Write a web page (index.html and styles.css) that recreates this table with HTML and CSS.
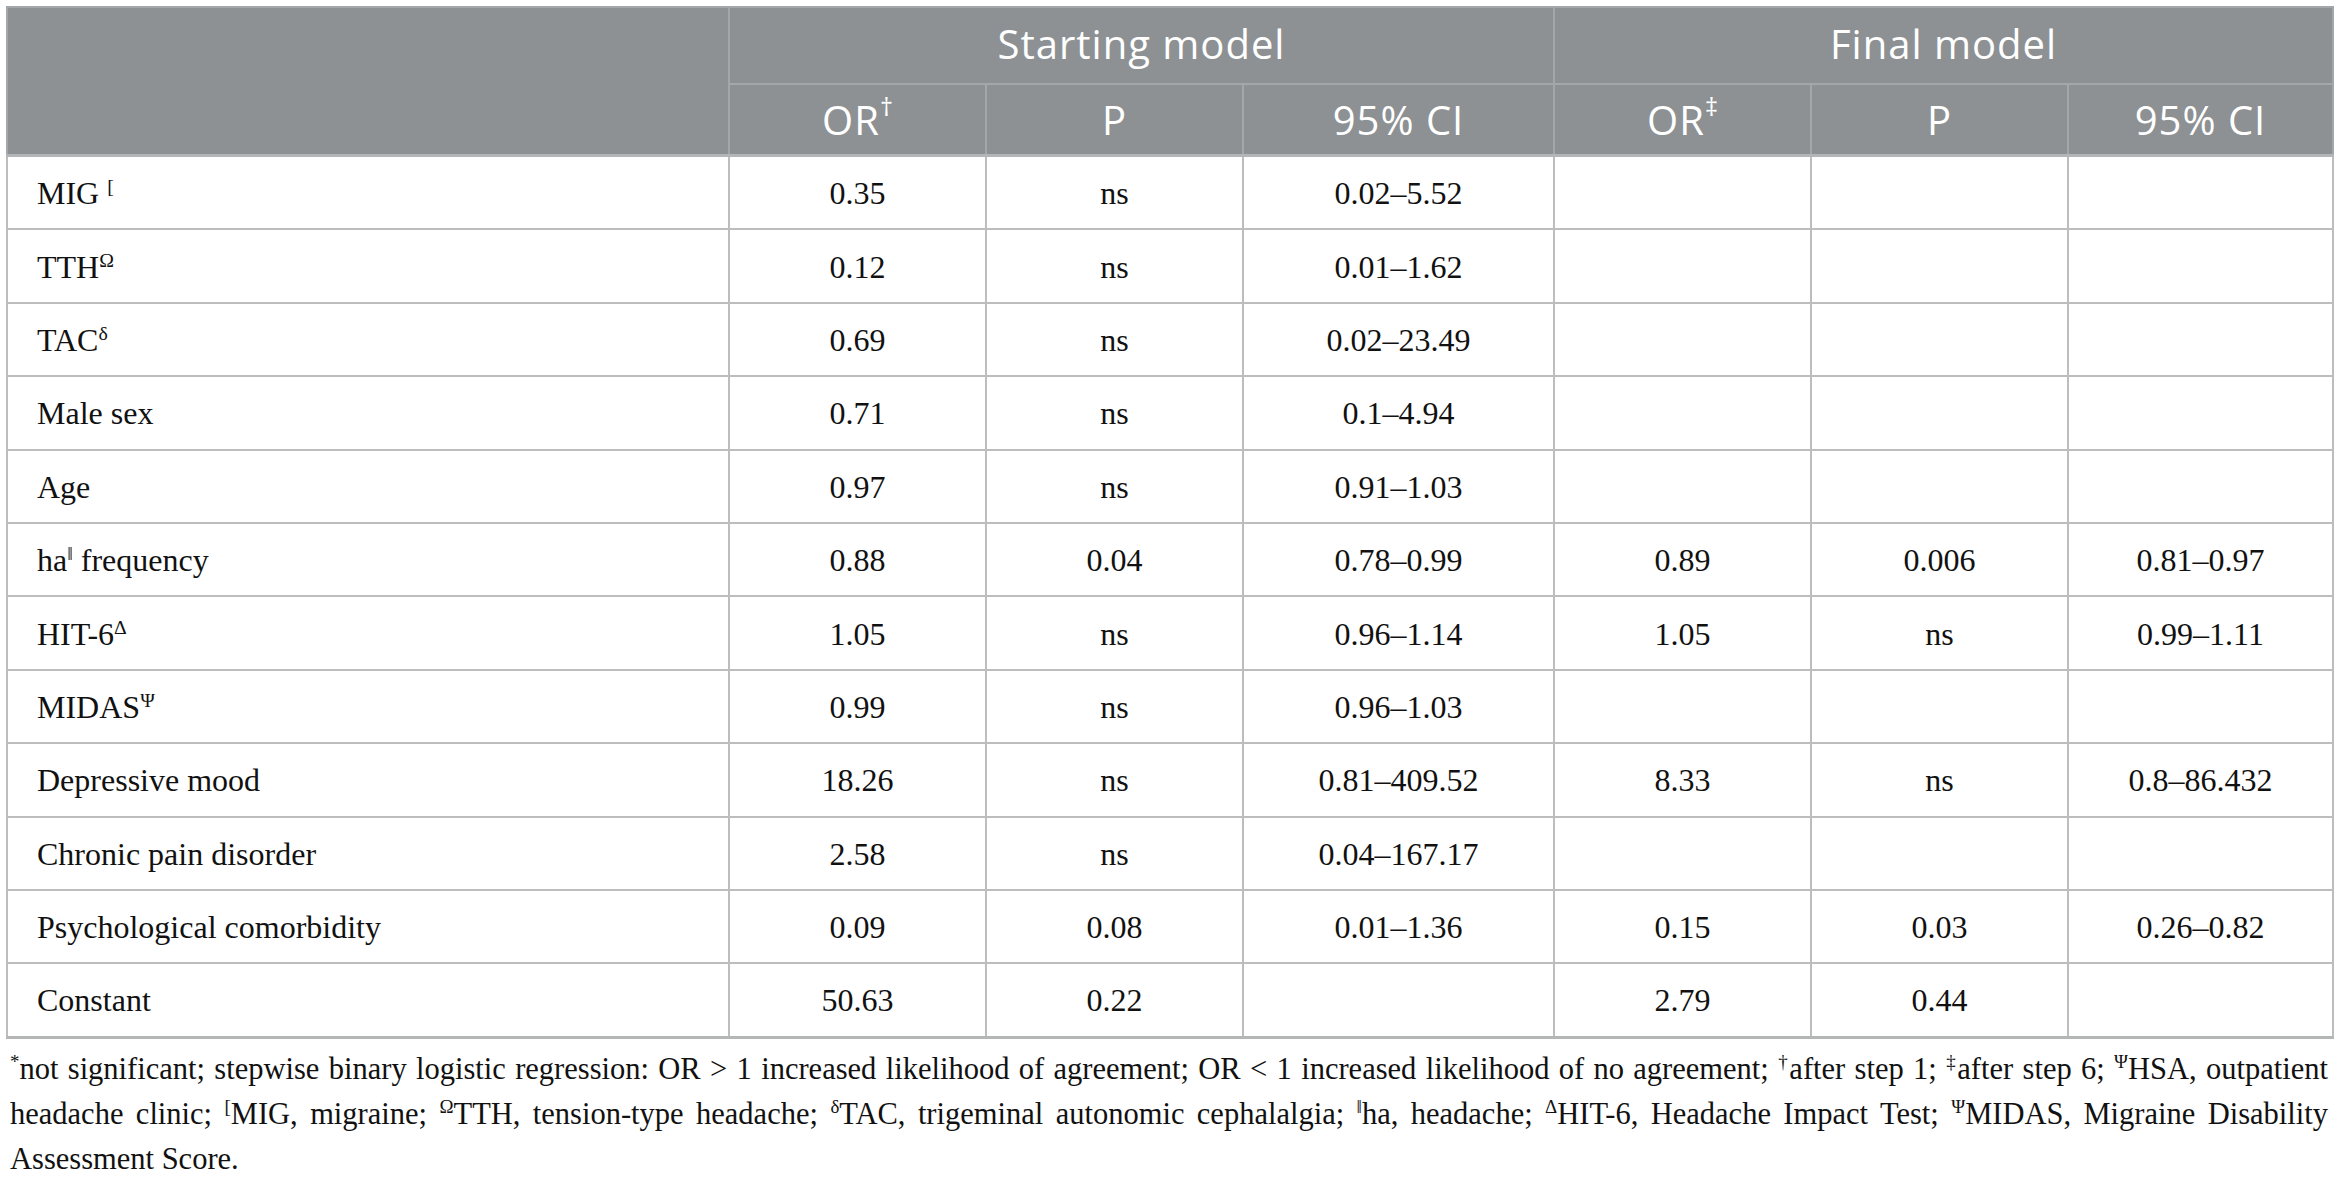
FILE: index.html
```html
<!DOCTYPE html>
<html lang="en">
<head>
  <meta charset="UTF-8">
  <title>Logistic Regression Table</title>
  <link rel="stylesheet" href="styles.css">
</head>
<body>
  <div class="page">
    <table class="results">
      <colgroup>
        <col class="col-label">
        <col class="col-num">
        <col class="col-num">
        <col class="col-ci">
        <col class="col-num">
        <col class="col-num">
        <col class="col-last">
      </colgroup>
      <thead>
        <tr class="group-row">
          <th rowspan="2" class="blank"></th>
          <th colspan="3">Starting model</th>
          <th colspan="3">Final model</th>
        </tr>
        <tr class="sub-row">
          <th>OR<sup>†</sup></th>
          <th>P</th>
          <th>95% CI</th>
          <th>OR<sup>‡</sup></th>
          <th>P</th>
          <th>95% CI</th>
        </tr>
      </thead>
      <tbody>
        <tr>
          <td class="label">MIG <sup>[</sup></td>
          <td>0.35</td><td>ns</td><td>0.02–5.52</td>
          <td></td><td></td><td></td>
        </tr>
        <tr>
          <td class="label">TTH<sup>Ω</sup></td>
          <td>0.12</td><td>ns</td><td>0.01–1.62</td>
          <td></td><td></td><td></td>
        </tr>
        <tr>
          <td class="label">TAC<sup>δ</sup></td>
          <td>0.69</td><td>ns</td><td>0.02–23.49</td>
          <td></td><td></td><td></td>
        </tr>
        <tr>
          <td class="label">Male sex</td>
          <td>0.71</td><td>ns</td><td>0.1–4.94</td>
          <td></td><td></td><td></td>
        </tr>
        <tr>
          <td class="label">Age</td>
          <td>0.97</td><td>ns</td><td>0.91–1.03</td>
          <td></td><td></td><td></td>
        </tr>
        <tr>
          <td class="label">ha<sup>‖</sup> frequency</td>
          <td>0.88</td><td>0.04</td><td>0.78–0.99</td>
          <td>0.89</td><td>0.006</td><td>0.81–0.97</td>
        </tr>
        <tr>
          <td class="label">HIT-6<sup>Δ</sup></td>
          <td>1.05</td><td>ns</td><td>0.96–1.14</td>
          <td>1.05</td><td>ns</td><td>0.99–1.11</td>
        </tr>
        <tr>
          <td class="label">MIDAS<sup>Ψ</sup></td>
          <td>0.99</td><td>ns</td><td>0.96–1.03</td>
          <td></td><td></td><td></td>
        </tr>
        <tr>
          <td class="label">Depressive mood</td>
          <td>18.26</td><td>ns</td><td>0.81–409.52</td>
          <td>8.33</td><td>ns</td><td>0.8–86.432</td>
        </tr>
        <tr>
          <td class="label">Chronic pain disorder</td>
          <td>2.58</td><td>ns</td><td>0.04–167.17</td>
          <td></td><td></td><td></td>
        </tr>
        <tr>
          <td class="label">Psychological comorbidity</td>
          <td>0.09</td><td>0.08</td><td>0.01–1.36</td>
          <td>0.15</td><td>0.03</td><td>0.26–0.82</td>
        </tr>
        <tr>
          <td class="label">Constant</td>
          <td>50.63</td><td>0.22</td><td></td>
          <td>2.79</td><td>0.44</td><td></td>
        </tr>
      </tbody>
    </table>

    <div class="notes">
      <span class="line spread"><sup>*</sup>not significant; stepwise binary logistic regression: OR &gt; 1 increased likelihood of agreement; OR &lt; 1 increased likelihood of no agreement; <sup>†</sup>after step 1; <sup>‡</sup>after step 6; <sup>Ψ</sup>HSA, outpatient</span>
      <span class="line spread">headache clinic; <sup>[</sup>MIG, migraine; <sup>Ω</sup>TTH, tension-type headache; <sup>δ</sup>TAC, trigeminal autonomic cephalalgia; <sup>‖</sup>ha, headache; <sup>Δ</sup>HIT-6, Headache Impact Test; <sup>Ψ</sup>MIDAS, Migraine Disability</span>
      <span class="line">Assessment Score.</span>
    </div>
  </div>
</body>
</html>
```

FILE: styles.css
```css
body {
  margin: 0;
  background: #fff;
  color: #111;
  font-family: "Liberation Serif", "Times New Roman", serif;
}
.page {
  padding: 6px 6px 0 6px;
}
.results {
  width: 2326px;
  table-layout: fixed;
  border-collapse: collapse;
  border-left: 2px solid #b4b6b6;
  border-right: 2px solid #b4b6b6;
  border-bottom: 3px solid #b4b6b6;
}
.col-label { width: 722px; }
.col-num { width: 257px; }
.col-ci { width: 311px; }
.col-last { width: 265px; }

/* header */
.results th {
  background: #8d9194;
  color: #fff;
  font-family: "Open Sans", "Noto Sans", sans-serif;
  font-weight: 400;
  font-size: 40px;
  letter-spacing: 1px;
  text-align: center;
  vertical-align: middle;
  padding: 0;
  border: 2px solid #a4a7aa;
}
.results thead tr:last-child th,
.results th.blank {
  border-bottom: 3px solid #b3b6b8;
}
.group-row th {
  height: 71px;
  padding-bottom: 4px;
}
.sub-row th {
  height: 69px;
}
.results th sup {
  font-size: 64%;
  line-height: 0;
  vertical-align: 0.75em;
  letter-spacing: 0;
}

/* body */
.results td {
  height: 69.4px;
  border: 2px solid #bdbdbd;
  font-size: 32px;
  text-align: center;
  vertical-align: middle;
  padding: 2px 0 0 0;
}
.results td.label {
  text-align: left;
  padding-left: 29px;
}
.results td sup {
  font-size: 62%;
  line-height: 0;
  vertical-align: 0.55em;
}

/* footnote */
.notes {
  margin-top: 8px;
  padding: 0 4px 0 4px;
  font-size: 30.5px;
  line-height: 45px;
}
.notes .line {
  display: block;
  white-space: nowrap;
}
.notes .spread {
  white-space: normal;
  text-align: justify;
  text-align-last: justify;
}
.notes sup {
  font-size: 62%;
  line-height: 0;
  vertical-align: 0.6em;
}
```
